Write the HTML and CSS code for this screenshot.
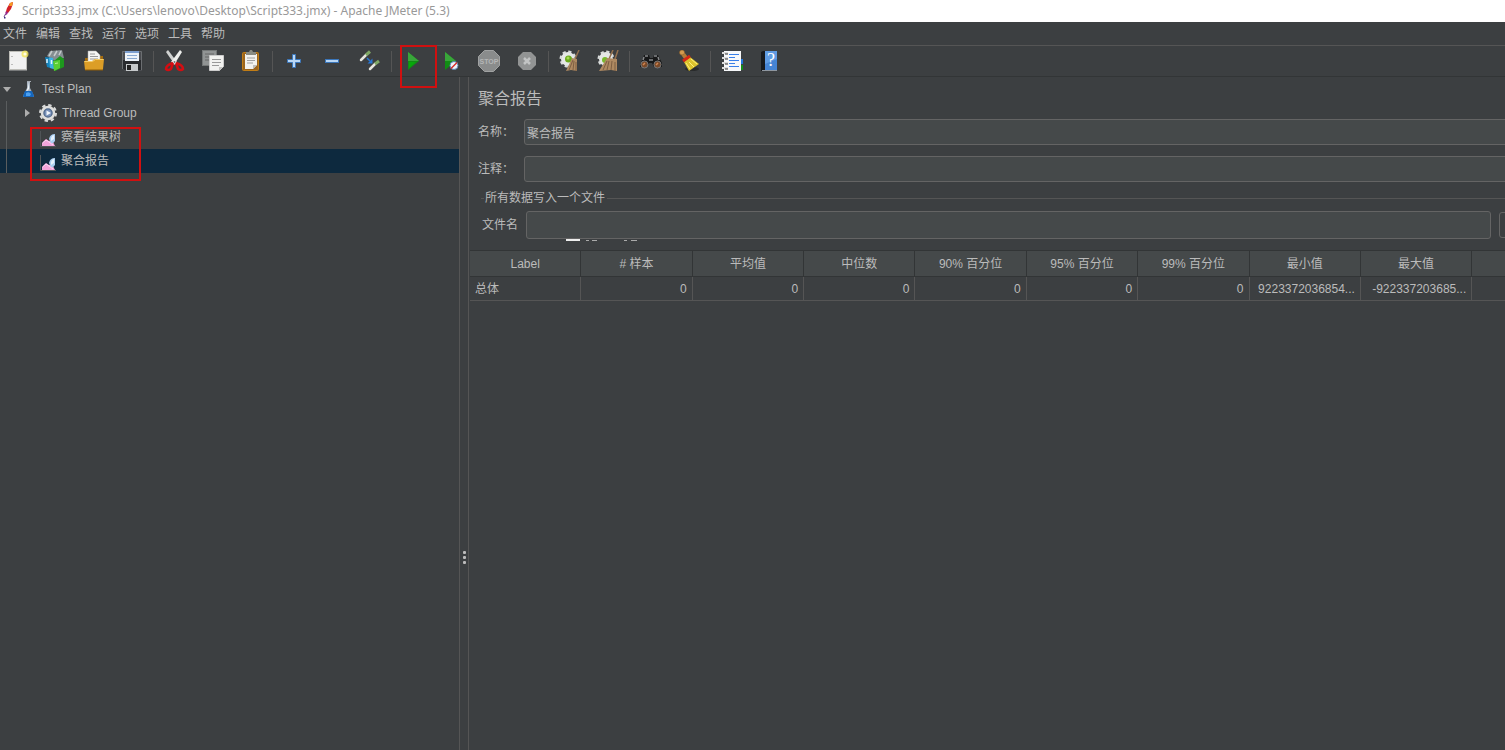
FILE: index.html
```html
<!DOCTYPE html>
<html lang="zh-CN">
<head>
    <meta charset="UTF-8">
    <meta name="viewport" content="width=device-width, initial-scale=1.0">
    <title>Script333.jmx - Apache JMeter (5.3)</title>
    <link rel="stylesheet" href="styles.css">
</head>
<body>
    <header class="titlebar">
        <svg class="feather" width="16" height="20" viewBox="0 0 16 20">
            <path d="M13 1 L10 2 L7 7 L5.5 12 L8 12 L11 8 L12.500 4 Z" fill="#d22128"/>
            <path d="M13 1 L10 2 L9 5 L12 5 Z" fill="#f69923"/>
            <path d="M6 10 L5 14 L7 13.5 L8 11.5 Z" fill="#97278e"/>
            <path d="M5.5 13 L4 16" stroke="#6d3a86" fill="none"/>
            <path d="M4 16h1.500v1.500H4z" fill="#342a7b"/>
        </svg>
        <span>Script333.jmx (C:\Users\lenovo\Desktop\Script333.jmx) - Apache JMeter (5.3)</span>
    </header>

    <nav class="menubar">
        <button>文件</button>
        <button>编辑</button>
        <button>查找</button>
        <button>运行</button>
        <button>选项</button>
        <button>工具</button>
        <button>帮助</button>
    </nav>

    <div class="toolbar">
        <button aria-label="新建">
            <svg viewBox="0 0 22 22">
                <rect x="2.5" y="1.5" width="17" height="18" fill="#f1f1f1" stroke="#bdbdb8"/>
                <path d="M2 20.500h18" stroke="#77797a"/>
                <path d="M5 6v1M5 14v1" stroke="#aaa" stroke-width="1.500"/>
                <circle cx="18" cy="4" r="3.500" fill="#f3e65c" opacity=".8"/>
                <circle cx="18" cy="4" r="1.600" fill="#fffde0"/>
            </svg>
        </button>
        <button aria-label="模板">
            <svg viewBox="0 0 22 22">
                <path d="M2 6 L5 1 L17 0 L19 8 L10 11Z" fill="#858e91"/>
                <path d="M4 6 L7 1 M9 6 L12 1 M14 5 L16 1" stroke="#c6cccd" stroke-width="1.500"/>
                <path d="M0 7 L8 8 L9 19 L2 17Z" fill="#1684bd"/>
                <path d="M4 7.500 L8 8 L9 19 L5 18Z" fill="#3db2e5"/>
                <path d="M2 9v4M6.500 10v4" stroke="#e1f5ff" stroke-width="1.500"/>
                <path d="M9 11 L15 6 L19 9 L19 17 L10 21Z" fill="#1d981d"/>
                <path d="M8 11 L15 10 L15 18 L9 21Z" fill="#59cf35"/>
                <path d="M10 13.500l3-.5" stroke="#baf49b"/>
            </svg>
        </button>
        <button aria-label="打开">
            <svg viewBox="0 0 22 22">
                <path d="M2 8h5v-2h13v14H2z" fill="#a36b0d"/>
                <path d="M5 1h8l4 4v11H5z" fill="#f5f5f3" stroke="#aaa" stroke-width=".5"/>
                <path d="M7 4h5M7 6.500h8M7 9h8" stroke="#999"/>
                <path d="M1 11h8l3-2h9l-1 10q0 1-1 1H2z" fill="#dc9e27"/>
                <path d="M1.500 11.500h8l3-2h8" stroke="#f4cd6b" fill="none"/>
                <path d="M2 20h18" stroke="#8f5c07"/>
            </svg>
        </button>
        <button aria-label="保存">
            <svg viewBox="0 0 22 22">
                <path d="M1 2q0-1 1-1h18q1 0 1 1v19H4l-3-2z" fill="#4a4c50"/>
                <path d="M1 10h20v10H4l-3-2z" fill="#292b2e"/>
                <path d="M1.500 19V1.500h19V20" fill="none" stroke="#6b6e71"/>
                <rect x="4" y="1" width="14" height="10" fill="#edf3f9"/>
                <path d="M4 2h14" stroke="#7da0d1" stroke-width="2"/>
                <path d="M6 5.500h10M6 8.500h10" stroke="#89a9d2"/>
                <rect x="5" y="14" width="12" height="7" fill="#c6c9cb"/>
                <rect x="6" y="15" width="4" height="5" fill="#222"/>
            </svg>
        </button>
        <span class="sep"></span>
        <button aria-label="剪切">
            <svg viewBox="0 0 22 22">
                <path d="M2 2 L4 0 L13 12 L11 15Z" fill="#d0d2d1"/>
                <path d="M18 2 L16 0 L7 12 L10 15Z" fill="#eeefed"/>
                <circle cx="10.500" cy="12" r="1" fill="#777"/>
                <path d="M9 13 L7 19 Q4 21 2 19 Q2 15 9 13 M12 13 L14 19 Q17 21 19 19 Q19 15 12 13" fill="none" stroke="#d40d12" stroke-width="2.500"/>
            </svg>
        </button>
        <button aria-label="复制">
            <svg viewBox="0 0 22 22">
                <rect x="0.500" y="0.500" width="14" height="15" fill="#919494" stroke="#747777"/>
                <path d="M3 4h9M3 7h5M3 10h4" stroke="#666"/>
                <path d="M7.500 5.500h14v11l-4 4h-10z" fill="#f2f2f0" stroke="#ccc"/>
                <path d="M10 9.500h9M10 12.500h9M10 15.500h7" stroke="#999"/>
                <path d="M17 21v-4h4z" fill="#c2c2c0"/>
            </svg>
        </button>
        <button aria-label="粘贴">
            <svg viewBox="0 0 22 22">
                <rect x="2.500" y="2.500" width="16" height="18" rx="1" fill="#9b651d" stroke="#c17d16"/>
                <path d="M5 4h12v11l-4 4H5z" fill="#f2f2ef"/>
                <path d="M6 5V2h3l1-2h2l1 2h3v3z" fill="#898b83"/>
                <path d="M7 8h8M7 10.500h8M7 13h6" stroke="#a0a0a0"/>
                <path d="M13 19v-4h4z" fill="#bebebb"/>
            </svg>
        </button>
        <span class="sep"></span>
        <button aria-label="展开">
            <svg viewBox="0 0 22 22">
                <path d="M9.500 4.500h3v5h5v3h-5v5h-3v-5h-5v-3h5z" fill="#b9d7f5" stroke="#3b76ba"/>
            </svg>
        </button>
        <button aria-label="收起">
            <svg viewBox="0 0 22 22">
                <rect x="4.500" y="9.500" width="13" height="3" fill="#b9d7f5" stroke="#3b76ba"/>
            </svg>
        </button>
        <button aria-label="切换">
            <svg viewBox="0 0 22 22">
                <path d="M2 10 L7 5 M11 19 L16 14" stroke="#e6e6df" stroke-width="2.500" stroke-linecap="round"/>
                <path d="M7 5 L11 1.500 M16 14 L20 11" stroke="#80a866" stroke-width="3"/>
                <path d="M8 8l3 3" stroke="#2877d4" stroke-width="1.500"/>
                <path d="M13.500 8.500v5h-5z" fill="#2877d4"/>
            </svg>
        </button>
        <span class="sep"></span>
        <div class="marked">
            <button aria-label="启动">
                <svg viewBox="0 0 22 22">
                    <path d="M6 2 L17 11 L6 20Z" fill="#118c14"/>
                    <path d="M6 2 L17 11 H6Z" fill="#39a63a"/>
                    <path d="M7 12h7l-7 6z" fill="#07a80a"/>
                </svg>
            </button>
            <span class="mark mark-start"></span>
        </div>
        <button aria-label="不停顿启动">
            <svg viewBox="0 0 22 22">
                <path d="M5 2 L16 11 L5 20Z" fill="#118c14"/>
                <path d="M5 2 L16 11 H5Z" fill="#39a63a"/>
                <circle cx="14" cy="15.500" r="4" fill="#eef3fa" stroke="#5d85b7"/>
                <path d="M11 18.500l6-6" stroke="#d52b27" stroke-width="1.500"/>
            </svg>
        </button>
        <button aria-label="停止" disabled>
            <svg viewBox="0 0 22 22">
                <path d="M6.500.5h9l6 6v9l-6 6h-9l-6-6v-9z" fill="#8a8c8c" stroke="#a0a2a2"/>
                <text class="stop-text" x="11" y="14" text-anchor="middle">STOP</text>
            </svg>
        </button>
        <button aria-label="关闭" disabled>
            <svg viewBox="0 0 22 22">
                <path d="M7 2h8l5 5v8l-5 5H7l-5-5V7z" fill="#929494"/>
                <path d="M8 8l6 6M14 8l-6 6" stroke="#c2c4c4" stroke-width="2.500"/>
            </svg>
        </button>
        <span class="sep"></span>
        <button aria-label="清除">
            <svg viewBox="0 0 22 22">
                <circle cx="9" cy="9" r="7.500" fill="none" stroke="#d9dcdb" stroke-width="2" stroke-dasharray="3.300 2.590"/>
                <circle cx="9" cy="9" r="7" fill="#e5e7e6"/>
                <circle cx="9.500" cy="9" r="3.500" fill="#6aa81c"/>
                <circle cx="9" cy="8" r="1.500" fill="#a4dc50"/>
                <path d="M20 0l-4 9" stroke="#94704d" stroke-width="1.500"/>
                <path d="M13 8l5 1 0 12-6-1-5 1z" fill="#ae8961"/>
                <path d="M14 10l-4 10M15 11l-1 9M17 12v9" stroke="#7d5e42"/>
            </svg>
        </button>
        <button aria-label="清除全部">
            <svg viewBox="0 0 22 22">
                <circle cx="9" cy="9" r="7.500" fill="none" stroke="#d9dcdb" stroke-width="2" stroke-dasharray="3.300 2.590"/>
                <circle cx="9" cy="9" r="7" fill="#e5e7e6"/>
                <circle cx="8" cy="10" r="3" fill="#78b82c"/>
                <path d="M16 0l-4 9M21 0l-3 9" stroke="#94704d" stroke-width="1.500"/>
                <path d="M10 8l10 1v12l-6-1-12 1z" fill="#ae8961"/>
                <path d="M10 11l-4 9M12 11l-2 9M15 11l-1 9M18 12v9" stroke="#7d5e42"/>
            </svg>
        </button>
        <span class="sep"></span>
        <button aria-label="查找">
            <svg viewBox="0 0 22 22">
                <path d="M1 13L4 5h5l1 3h3l1-3h4l4 8v4h-8l-2-4h-3l-2 4H0z" fill="#171819"/>
                <path d="M5 6h3M14 6h3M3 10l1-3M19 10l-1-3M9 10h4" stroke="#858789" stroke-width="1.500"/>
                <circle cx="4.500" cy="14.500" r="3.500" fill="#7a4928" stroke="#777879"/>
                <circle cx="17.500" cy="14.500" r="3.500" fill="#7a4928" stroke="#777879"/>
                <path d="M3 15l2-2M16 15l2-2" stroke="#d18652" stroke-width="1.500"/>
            </svg>
        </button>
        <button aria-label="重置查找">
            <svg viewBox="0 0 22 22">
                <ellipse cx="14" cy="19" rx="7" ry="2" fill="#292b2c"/>
                <path d="M5 4l3 4" stroke="#b57b37" stroke-width="4"/>
                <circle cx="4" cy="2.500" r="2.500" fill="#d49a4e" stroke="#805622" stroke-width=".5"/>
                <path d="M6 12l6-5 9 7-10 7z" fill="#dcc32d"/>
                <path d="M8 13l4 6M11 12l5 5M13 9l6 5" stroke="#fff27b"/>
                <path d="M5 11l7-5" stroke="#d42716" stroke-width="3"/>
            </svg>
        </button>
        <span class="sep"></span>
        <button aria-label="函数助手">
            <svg viewBox="0 0 22 22">
                <path d="M18 9h4v5h-4z" fill="#2175d8"/>
                <path d="M18 15h4v5h-4z" fill="#138c18"/>
                <rect x="3" y="1" width="17" height="20" fill="#f7f8fa"/>
                <path d="M1 3h6M1 8h6M1 13h6M1 18h6" stroke="#ddd" stroke-width="2"/>
                <path d="M4 4h3M4 9h3M4 14h3M4 19h3" stroke="#333"/>
                <path d="M8 4.500h10M8 7.500h6M8 10.500h10M8 13.500h6M8 16.500h10" stroke="#397fe8"/>
            </svg>
        </button>
        <button aria-label="帮助">
            <svg viewBox="0 0 22 22">
                <path d="M2 2l2-1h14v20H2z" fill="#17191d"/>
                <path d="M6 1h12v20H6z" fill="#4584d4"/>
                <path d="M6 1h12v8L6 14z" fill="#609be2"/>
                <path d="M3 20.500h15" stroke="#8e969f"/>
                <text class="help-text" x="12" y="16" text-anchor="middle">?</text>
            </svg>
        </button>
    </div>

    <main class="workspace">
        <aside class="tree-pane">
            <ul class="tree">
                <li class="node root">
                    <span class="arrow open"></span>
                    <svg width="16" height="18" viewBox="0 0 16 18">
                        <path d="M7 2h3v6l4 8q0 1-1 1H4q-1 0-1-1l4-8z" fill="#a9b5c2"/>
                        <path d="M9 2v7l-3 3 2-5z" fill="#f1f5f8"/>
                        <path d="M5 11h7l2 5q0 1-1 1H4q-1 0-1-1z" fill="#1466bd"/>
                        <path d="M6 13q3-2 5 1l-1 2H6z" fill="#4ca0f0"/>
                        <path d="M7 1h4v1H7z" fill="#a2a9b1"/>
                    </svg>
                    <span>Test Plan</span>
                </li>
                <li class="node group">
                    <span class="arrow"></span>
                    <svg width="20" height="20" viewBox="0 0 20 20">
                        <circle cx="10" cy="10" r="8" fill="none" stroke="#d8d9d9" stroke-width="2" stroke-dasharray="3.400 2.880"/>
                        <circle cx="10" cy="10" r="6" fill="#4c6588" stroke="#dededc" stroke-width="2.500"/>
                        <circle cx="10" cy="10" r="3.500" fill="#7790b8"/>
                        <path d="M8.500 7.500L13 10l-4.500 2.500z" fill="#f0f4fa"/>
                    </svg>
                    <span>Thread Group</span>
                </li>
                <li class="node leaf">
                    <svg width="16" height="16" viewBox="0 0 16 16">
                        <path d="M.5 0v15.500H16" stroke="#505457" fill="none"/>
                        <path d="M2 15v-3l4-4 3 2 3-1 3 6z" fill="#f3a4da"/>
                        <path d="M2.500 12l3.500-3 3 2 4 3" stroke="#fbd8f4" fill="none"/>
                        <path d="M9 8q1-5 6-5v7q-2 3-4 2z" fill="#a9cdf0"/>
                        <path d="M11 7q1-3 3-3v4l-3 2z" fill="#e5f1fc"/>
                    </svg>
                    <span>察看结果树</span>
                </li>
                <li class="node leaf selected">
                    <svg width="16" height="16" viewBox="0 0 16 16">
                        <path d="M.5 0v15.500H16" stroke="#505457" fill="none"/>
                        <path d="M2 15v-3l4-4 3 2 3-1 3 6z" fill="#f3a4da"/>
                        <path d="M2.500 12l3.500-3 3 2 4 3" stroke="#fbd8f4" fill="none"/>
                        <path d="M9 8q1-5 6-5v7q-2 3-4 2z" fill="#a9cdf0"/>
                        <path d="M11 7q1-3 3-3v4l-3 2z" fill="#e5f1fc"/>
                    </svg>
                    <span>聚合报告</span>
                </li>
            </ul>
            <span class="mark mark-listeners"></span>
        </aside>

        <div class="splitter"><i></i><i></i><i></i></div>

        <section class="report">
            <h1>聚合报告</h1>
            <div class="field">
                <label for="name">名称：</label>
                <input type="text" id="name" value="聚合报告">
            </div>
            <div class="field">
                <label for="comment">注释：</label>
                <input type="text" id="comment">
            </div>
            <fieldset class="file-group">
                <legend>所有数据写入一个文件</legend>
                <div class="file-row">
                    <label for="filename">文件名</label>
                    <input type="text" id="filename">
                    <button class="browse" aria-label="浏览"></button>
                </div>
                <svg class="clipped-popup" width="80" height="3" viewBox="0 0 80 3">
                    <path d="M6 1h14" stroke="#eee" stroke-width="2"/>
                    <path d="M26 1.500h3M32 1.500h5M64 1.500h3M71 1.500h6" stroke="#aaa"/>
                </svg>
            </fieldset>
            <table class="results">
                <thead>
                    <tr>
                        <th>Label</th>
                        <th># 样本</th>
                        <th>平均值</th>
                        <th>中位数</th>
                        <th>90% 百分位</th>
                        <th>95% 百分位</th>
                        <th>99% 百分位</th>
                        <th>最小值</th>
                        <th>最大值</th>
                        <th class="rest"></th>
                    </tr>
                </thead>
                <tbody>
                    <tr>
                        <td>总体</td>
                        <td>0</td>
                        <td>0</td>
                        <td>0</td>
                        <td>0</td>
                        <td>0</td>
                        <td>0</td>
                        <td>9223372036854...</td>
                        <td>-922337203685...</td>
                        <td></td>
                    </tr>
                </tbody>
            </table>
        </section>
    </main>
</body>
</html>
```
FILE: styles.css
```css
* {
    box-sizing: border-box;
}

body {
    margin: 0;
    height: 100vh;
    display: flex;
    flex-direction: column;
    overflow: hidden;
    background: #3c3f41;
    color: #bbbbbb;
    font-family: "Liberation Sans", "Noto Sans CJK SC", sans-serif;
    font-size: 12px;
    line-height: 16px;
}

button,
input {
    font: inherit;
    color: inherit;
}

button {
    padding: 0;
    border: none;
    background: none;
}

.titlebar {
    display: flex;
    align-items: center;
    gap: 6px;
    height: 22px;
    background: #ffffff;
    color: #999999;
    font-family: "Noto Sans", sans-serif;
}

.feather {
    flex: none;
}

.menubar {
    display: flex;
    gap: 9px;
    height: 24px;
    padding: 0 3px;
    border-bottom: 1px solid #555555;
}

.toolbar {
    display: flex;
    align-items: center;
    height: 31px;
    border-bottom: 1px solid #323536;
}

.toolbar button {
    display: block;
    width: 38px;
    height: 30px;
    padding: 4px 9px 4px 7px;
}

.toolbar svg {
    display: block;
    width: 22px;
    height: 22px;
}

.sep {
    width: 1px;
    height: 21px;
    margin: 0 3px 0 1px;
    background: #555555;
}

.stop-text {
    font-size: 7px;
    font-weight: bold;
    fill: #b4b6b6;
}

.help-text {
    font-family: "Liberation Serif", serif;
    font-size: 18px;
    fill: #ffffff;
}

.marked {
    position: relative;
}

/* red callout frames */
.mark {
    position: absolute;
    border: 2px solid #d01010;
    pointer-events: none;
}

.mark-start {
    left: 5px;
    top: -1px;
    width: 37px;
    height: 43px;
    z-index: 1;
}

.mark-listeners {
    left: 30px;
    top: 50px;
    width: 111px;
    height: 54px;
}

.workspace {
    flex: 1;
    display: flex;
    min-height: 0;
}

.tree-pane {
    position: relative;
    flex: 0 0 460px;
    border-right: 1px solid #555555;
}

.tree {
    position: relative;
    list-style: none;
    margin: 0;
    padding: 0;
}

.tree::before {
    content: "";
    position: absolute;
    left: 6px;
    top: 24px;
    bottom: 0;
    width: 1px;
    background: #5a5d5e;
}

.node {
    display: flex;
    align-items: center;
    height: 24px;
}

.root {
    gap: 6px;
    padding-left: 3px;
}

.root svg {
    margin-left: 3px;
}

.group {
    gap: 4px;
    padding-left: 25px;
}

.group svg {
    margin-left: 4px;
}

.leaf {
    gap: 5px;
    padding-left: 40px;
}

.leaf svg {
    margin-top: 4px;
}

.selected {
    background: #0d293e;
}

.arrow {
    border: 4px solid transparent;
    border-left: 5px solid #adadad;
    border-right: none;
}

.arrow.open {
    border: 4px solid transparent;
    border-top: 5px solid #adadad;
    border-bottom: none;
}

.splitter {
    flex: 0 0 9px;
    display: flex;
    flex-direction: column;
    align-items: center;
    gap: 2px;
    padding-top: 474px;
    border-right: 1px solid #555555;
}

.splitter i {
    width: 3px;
    height: 3px;
    border-radius: 1px;
    background: #bbbbbb;
}

.report {
    flex: 1;
    min-width: 0;
    overflow: hidden;
}

.report h1 {
    margin: 10px 9px 8px;
    font-size: 16px;
    font-weight: normal;
    line-height: 24px;
}

/* the fields run on past the right edge of the window */
.field {
    display: flex;
    align-items: center;
    margin: 0 -8px 11px 9px;
}

.field label {
    flex: 0 0 46px;
}

.field input,
.file-row input {
    flex: 1;
    min-width: 0;
    height: 26px;
    padding: 0 2px;
    border: 1px solid #646464;
    border-radius: 3px;
    background: #45494a;
}

.file-group {
    position: relative;
    min-width: 0;
    margin: 0 0 11px 12px;
    padding: 0;
    border: 0 solid #555555;
    border-top-width: 1px;
}

.file-group legend {
    margin-left: 3px;
    padding: 0 2px 0 1px;
    line-height: 10px;
}

.file-row {
    display: flex;
    align-items: center;
    gap: 8px;
    margin: 8px -16px 0 1px;
}

.file-row input {
    height: 28px;
}

.browse {
    width: 22px;
    height: 26px;
    border: 1px solid #646464;
    border-radius: 3px;
}

/* edge of a popup hidden behind the file name box */
.clipped-popup {
    position: absolute;
    left: 79px;
    bottom: -3px;
}

.results {
    width: 100%;
    margin-left: 1px;
    table-layout: fixed;
    border-collapse: separate;
    border-spacing: 0;
    border-top: 1px solid #323536;
}

.results th {
    width: 10.75%;
    height: 26px;
    padding: 0;
    border-right: 1px solid #323536;
    border-bottom: 1px solid #323536;
    background: #45494a;
    font-weight: normal;
}

.results .rest {
    width: auto;
}

.results td {
    height: 24px;
    padding: 0 5px;
    border-right: 1px solid #555555;
    border-bottom: 1px solid #555555;
    text-align: right;
    white-space: nowrap;
}

.results td:first-child {
    text-align: left;
}

.results tr > :last-child {
    border-right: none;
}
```
